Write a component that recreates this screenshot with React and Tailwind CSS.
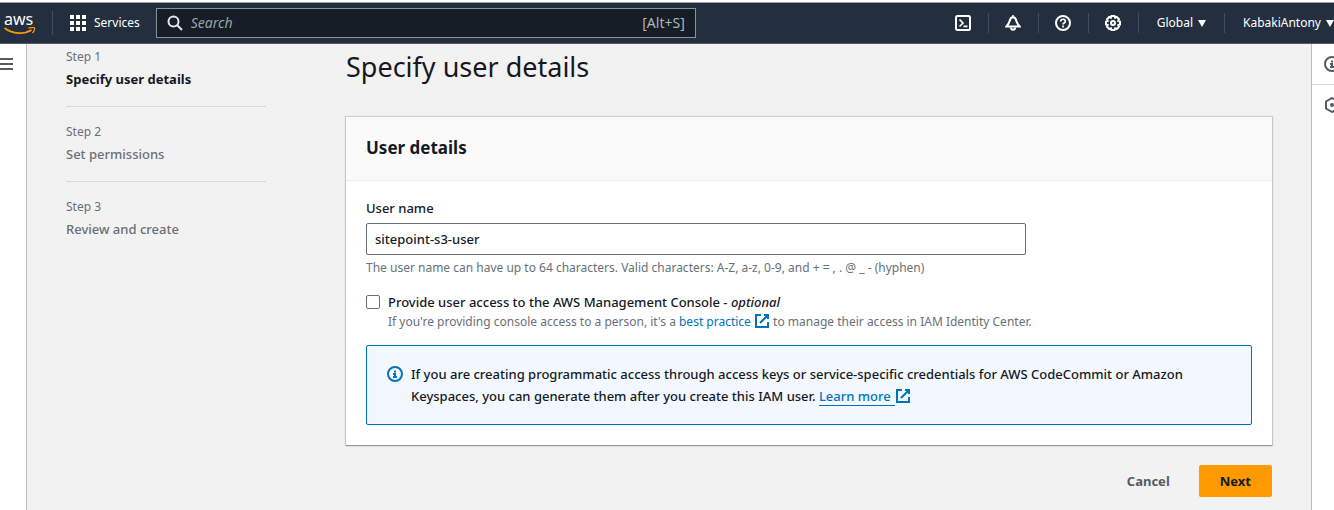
import { useState } from "react";

const steps = [
  { label: "Step 1", title: "Specify user details" },
  { label: "Step 2", title: "Set permissions" },
  { label: "Step 3", title: "Review and create" },
];

const Icon = ({ children, className = "size-4" }) => (
  <svg viewBox="0 0 16 16" fill="none" stroke="currentColor" strokeWidth="2" className={`shrink-0 ${className}`} aria-hidden="true">
    {children}
  </svg>
);

const InfoIcon = () => (
  <Icon>
    <circle cx="8" cy="8" r="7" />
    <path d="M8 11V8H6M10 11H6M8 6.5v-2" />
  </Icon>
);

const ExternalIcon = () => (
  <Icon className="inline-block size-4 align-[-3px]">
    <path d="M10 2h4v4M6 10l8-8M14 9v5H2V2h5" />
  </Icon>
);

const Caret = () => (
  <svg viewBox="0 0 8 7" className="h-[7px] w-2 shrink-0" fill="currentColor" aria-hidden="true">
    <path d="M0 0h8L4 7z" />
  </svg>
);

const TopNav = () => (
  <header className="border-t border-gray-400 bg-[#232f3e] text-white overflow-hidden">
    <div className="flex h-10 items-center text-xs">
      <a href="#home" className="flex w-[53px] shrink-0 flex-col border-r border-[#414d5c] pl-1" aria-label="AWS home">
        <span className="text-base leading-4">aws</span>
        <svg viewBox="0 0 32 8" className="h-2 w-8" fill="none" stroke="#ff9900" strokeWidth="1.6" aria-hidden="true">
          <path d="M0.5 1C9 7.5 20 7.5 27.5 3" />
          <path d="M24.5 1.2c3-.8 5.5-.8 6 0 .4.8-.5 3-2 5" strokeWidth="1.3" />
        </svg>
      </a>
      <button className="flex shrink-0 items-center gap-2 pl-[17px]">
        <svg viewBox="0 0 16 16" className="size-4" fill="currentColor" aria-hidden="true">
          <path d="M0 0h4v4H0zM6 0h4v4H6zM12 0h4v4h-4zM0 6h4v4H0zM6 6h4v4H6zM12 6h4v4h-4zM0 12h4v4H0zM6 12h4v4H6zM12 12h4v4h-4z" />
        </svg>
        Services
      </button>
      <label className="ml-4 flex h-[30px] w-[540px] items-center gap-2 border border-[#879596] bg-[#161d26] px-[10px] text-sm text-[#aab7b8]">
        <Icon className="size-4 text-gray-200">
          <circle cx="6.5" cy="6.5" r="5" />
          <path d="M10 10l5 5" />
        </Icon>
        <input type="search" aria-label="Search" placeholder="Search" className="min-w-0 flex-1 bg-transparent italic outline-none placeholder:text-[#95a5a6]" />
        <span>[Alt+S]</span>
      </label>
      <nav className="ml-auto flex h-5 shrink-0 divide-x divide-[#414d5c]">
        <button aria-label="CloudShell" className="flex w-[50px] items-center justify-center">
          <Icon>
            <rect x="1" y="1" width="14" height="14" rx="1.5" />
            <path d="M4.5 4.5L8 8 4.5 11.5M8.5 11.3h4" strokeWidth="1.7" />
          </Icon>
        </button>
        <button aria-label="Notifications" className="flex w-[50px] items-center justify-center">
          <Icon>
            <path d="M8 2.2c-2 0-2.9 1.6-3.3 3.6C4.3 8 3.3 9.2 1.4 11.500h13.2c-1.900-2.300-2.900-3.500-3.300-5.700C10.900 3.800 10 2.200 8 2.200zM8 .2v2" />
            <path d="M6 12.500c0 3 4 3 4 0" />
          </Icon>
        </button>
        <button aria-label="Help" className="flex w-[50px] items-center justify-center">
          <Icon>
            <circle cx="8" cy="8" r="7" />
            <path d="M5.7 6.5c0-3 4.6-3 4.6 0C10.3 8 8 8 8 9.5M8 10.5v2" strokeWidth="1.7" />
          </Icon>
        </button>
        <button aria-label="Settings" className="flex w-[50px] items-center justify-center">
          <Icon>
            <path d="M6.5 1h3l.6 1.7 1.7-.7 2.2 2.2-.7 1.7 1.7.6v3l-1.7.6.7 1.7-2.2 2.2-1.7-.7-.6 1.7h-3l-.6-1.7-1.7.7L2 11.8l.7-1.7L1 9.500v-3l1.700-.6L2 4.200 4.200 2l1.700.7z" />
            <circle cx="8" cy="8" r="2" />
          </Icon>
        </button>
        <button className="flex items-center gap-[5px] px-[18px]">
          Global <Caret />
        </button>
        <button className="flex items-center gap-[5px] pl-[18px]">
          KabakiAntony <Caret />
        </button>
      </nav>
    </div>
  </header>
);

const UserDetails = () => {
  const [userName, setUserName] = useState("sitepoint-s3-user");
  const [consoleAccess, setConsoleAccess] = useState(false);

  return (
    <section className="bg-white shadow-[0_1px_1px_0_rgba(0,28,36,0.3),0_0_1px_1px_rgba(0,28,36,0.15)]">
      <h2 className="border-b border-[#eaeded] bg-[#fafafa] px-5 pt-5 pb-[21px] text-[17px] leading-[22px] font-bold">User details</h2>
      <div className="px-5 pt-4 pb-5">
        <label htmlFor="user-name" className="block font-medium">User name</label>
        <input
          id="user-name"
          type="text"
          value={userName}
          onChange={(e) => setUserName(e.target.value)}
          className="mt-1 block h-8 w-full max-w-[660px] rounded-xs border border-[#687078] bg-white px-2 font-medium"
        />
        <p className="mt-1 text-xs leading-[18px] text-[#687078]">
          The user name can have up to 64 characters. Valid characters: A-Z, a-z, 0-9, and + = , . @ _ - (hyphen)
        </p>

        <div className="mt-[14px] flex gap-2">
          <input
            id="console-access"
            type="checkbox"
            checked={consoleAccess}
            onChange={(e) => setConsoleAccess(e.target.checked)}
            className="mt-1 size-[14px] shrink-0 appearance-none rounded-xs border border-[#687078] bg-white checked:bg-[#0073bb]"
          />
          <div>
            <label htmlFor="console-access" className="block font-medium">
              Provide user access to the AWS Management Console - <i>optional</i>
            </label>
            <p className="text-xs leading-[18px] text-[#687078]">
              If you're providing console access to a person, it's a{" "}
              <a href="#best-practice" className="text-[#0073bb]">best practice <ExternalIcon /></a> to manage their access in IAM Identity Center.
            </p>
          </div>
        </div>

        <div className="mt-[14px] flex gap-2 rounded-xs border border-[#0073bb] bg-[#f2f8fd] px-5 py-[17px]">
          <span className="flex h-[22px] items-center text-[#0073bb]"><InfoIcon /></span>
          <p className="flex-1 pr-8 font-medium">
            If you are creating programmatic access through access keys or service-specific credentials for AWS CodeCommit or Amazon
            Keyspaces, you can generate them after you create this IAM user.{" "}
            <a href="#learn-more" className="whitespace-nowrap text-[#0073bb]">
              <span className="border-b border-[#0073bb] pr-1">Learn more</span>
              <ExternalIcon />
            </a>
          </p>
        </div>
      </div>
    </section>
  );
};

const App = () => {
  return (
    <div className="flex min-h-screen flex-col overflow-hidden bg-white pt-[2px] font-['Noto_Sans','Open_Sans',sans-serif] text-[13px] leading-[22px] text-[#16191f]">
      <TopNav />
      <div className="flex flex-1 border-t border-[#545b64]">
        <aside className="w-[27px] shrink-0 border-r border-[#b9bfc4] pt-[13px]">
          <button aria-label="Open navigation" className="block text-[#545b64]">
            <svg viewBox="0 0 13 14" className="h-[14px] w-[13px]" stroke="currentColor" strokeWidth="2" aria-hidden="true">
              <path d="M0 2h13M0 7h13M0 12h13" />
            </svg>
          </button>
        </aside>

        <main className="flex min-w-0 flex-1 gap-20 bg-[#f2f2f3] px-[39px] pt-[2px] pb-3">
          <ol className="w-[200px] shrink-0">
            {steps.map((step, i) => (
              <li key={step.label} className="border-b border-[#d5dbdb] pb-4 not-first:pt-[14px] last:border-0">
                <p className="text-xs leading-[22px] text-[#687078]">{step.label}</p>
                <p className={i === 0 ? "font-bold" : "font-medium text-[#687078]"}>{step.title}</p>
              </li>
            ))}
          </ol>

          <div className="min-w-0 flex-1">
            <h1 className="mt-[3px] mb-8 text-[27px] leading-9">Specify user details</h1>
            <UserDetails />
            <div className="mt-5 flex justify-end gap-2 font-bold">
              <button className="h-8 rounded-xs px-[21px] text-[#545b64]">Cancel</button>
              <button className="h-8 rounded-xs bg-[#ff9900] px-[21px]">Next</button>
            </div>
          </div>
        </main>

        <aside className="w-[23px] shrink-0 overflow-hidden border-l border-[#b9bfc4] text-[#545b64]">
          <button aria-label="Info" className="flex h-[41px] w-10 items-center border-b border-[#d5dbdb] pl-3">
            <InfoIcon />
          </button>
          <button aria-label="Diagnostics" className="flex h-10 w-10 items-center pl-3">
            <Icon>
              <path d="M8 1l6 3.5v7L8 15l-6-3.5v-7z" />
              <circle cx="8" cy="8" r="1" />
            </Icon>
          </button>
        </aside>
      </div>
    </div>
  );
};

export default App;
